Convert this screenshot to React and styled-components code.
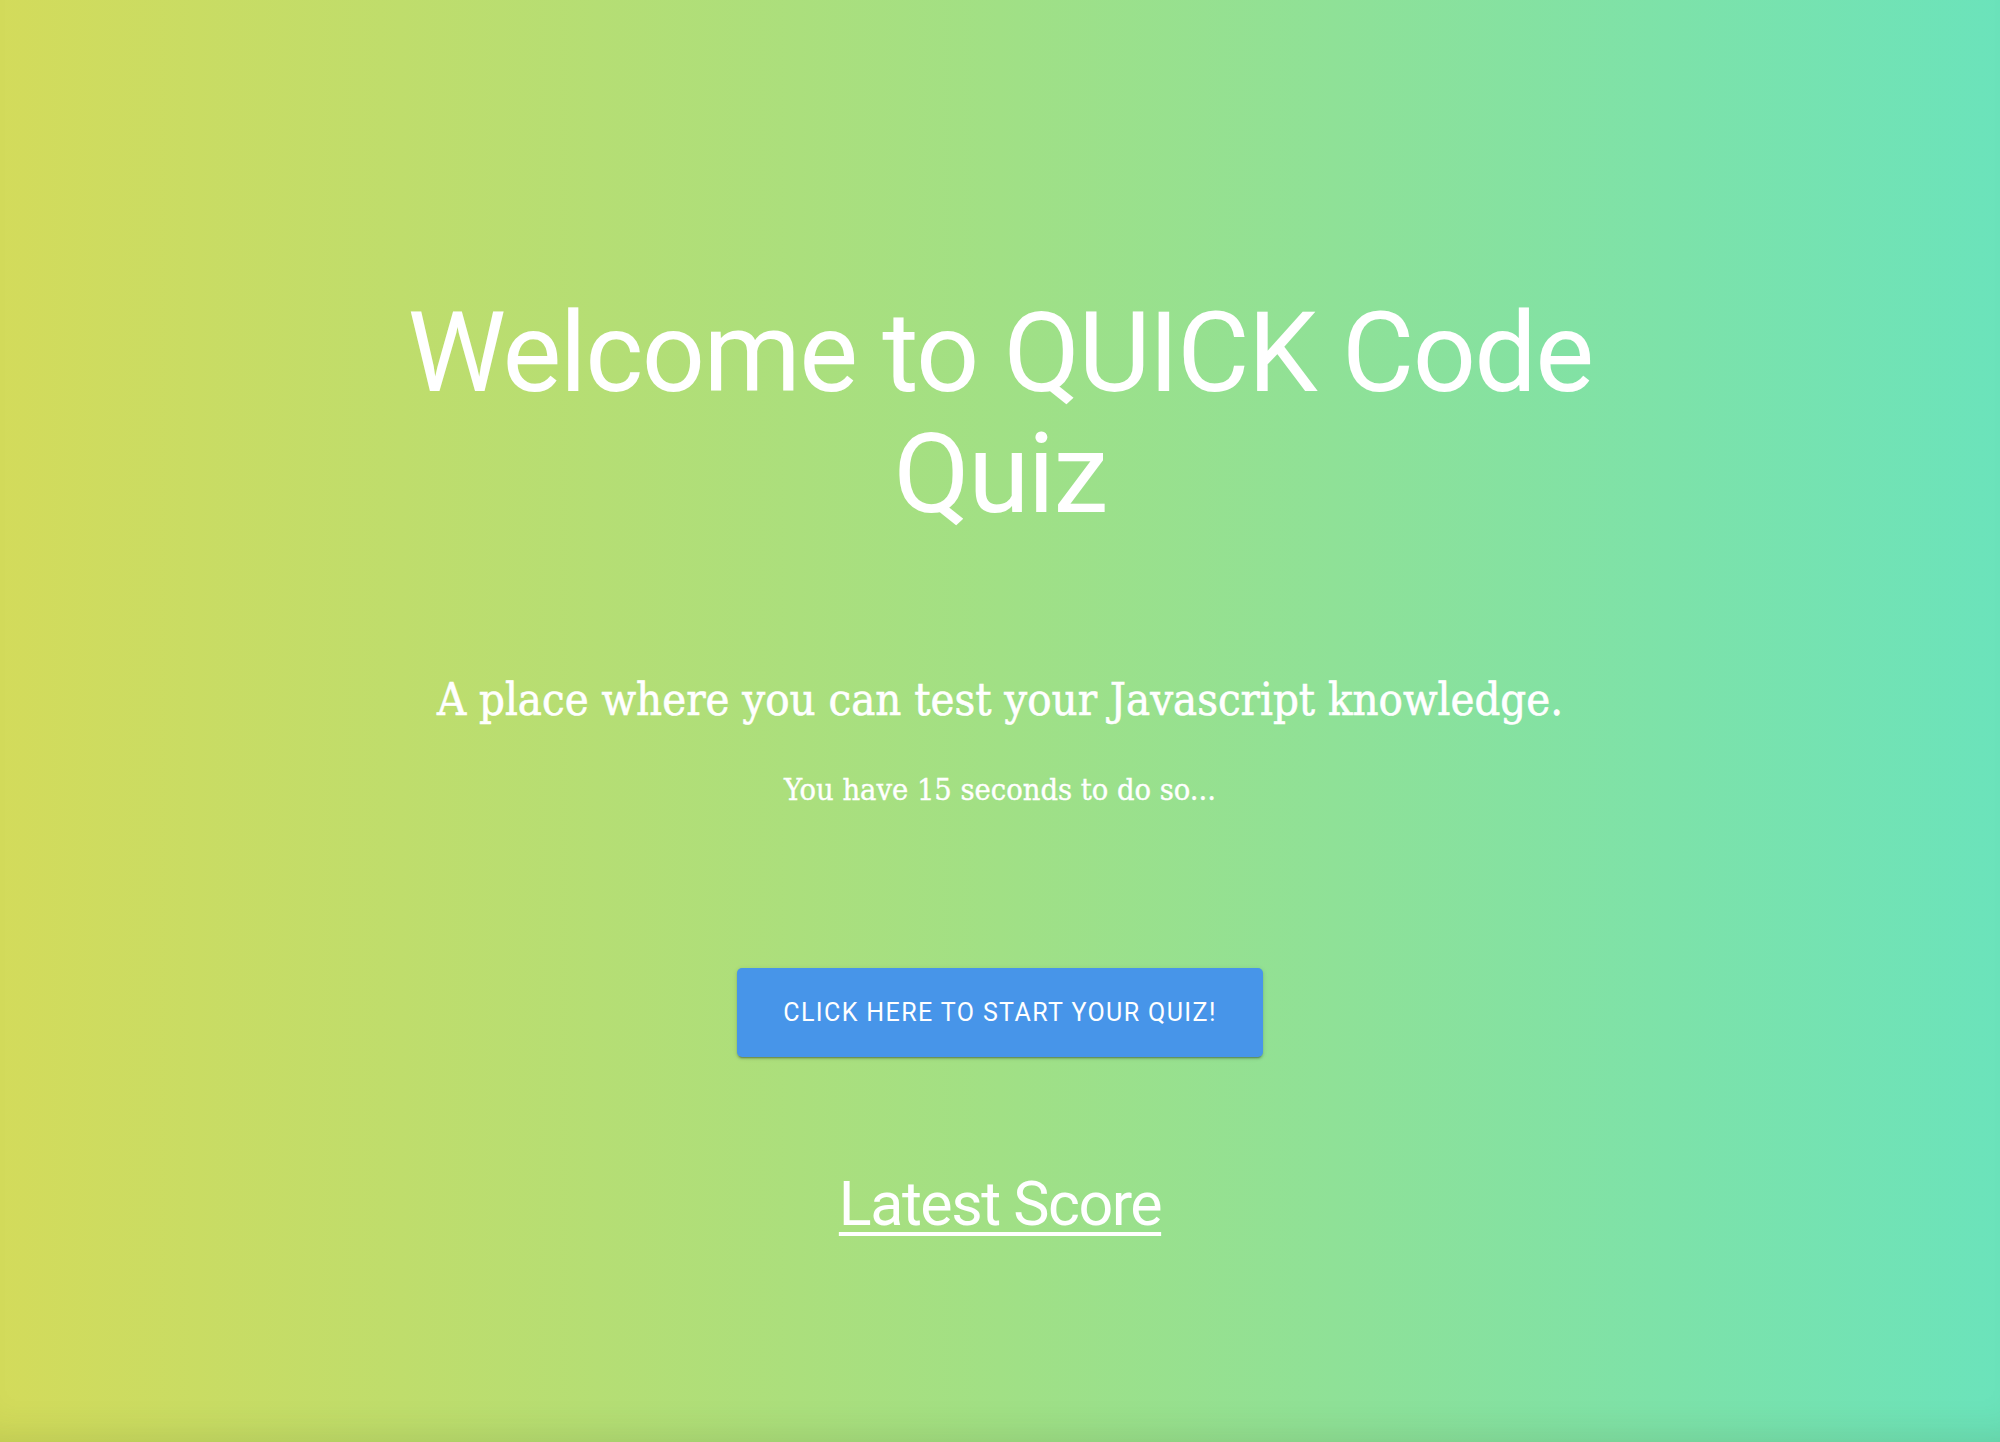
import styled, { createGlobalStyle } from 'styled-components';

const GlobalStyle = createGlobalStyle`
  html, body {
    margin: 0;
    padding: 0;
  }
  body {
    font-family: Roboto, "Liberation Sans", sans-serif;
  }
`;

const Page = styled.div`
  min-height: 1442px;
  box-sizing: border-box;
  padding-top: 293px;
  display: flex;
  flex-direction: column;
  align-items: center;
  background: linear-gradient(to right, #d3db5b 0%, #a1e085 50%, #6be3bb 100%);
  box-shadow: inset 0 -36px 40px -34px rgba(60, 90, 30, 0.18);
  color: #ffffff;
  text-align: center;
`;

const Title = styled.h1`
  margin: 0;
  width: 1240px;
  font-family: Roboto, sans-serif;
  font-weight: 400;
  font-size: 111px;
  line-height: 121px;
  letter-spacing: -1.6px;
`;

const Lead = styled.p`
  margin: ${(props) => props.top || '0'} 0 0;
  font-family: "DejaVu Serif Condensed", "DejaVu Serif", "Liberation Serif", serif;
  font-stretch: condensed;
  font-weight: 400;
  font-size: ${(props) => props.size || '45px'};
  line-height: ${(props) => props.height || '54px'};
  -webkit-text-stroke: ${(props) => props.stroke || '0.6px'} #ffffff;
  white-space: nowrap;
`;

const StartButton = styled.button`
  margin-top: 161px;
  width: 526px;
  height: 89px;
  border: none;
  border-radius: 5px;
  background-color: #4795e9;
  color: #ffffff;
  font-family: Roboto, sans-serif;
  font-weight: 400;
  font-size: 25px;
  letter-spacing: 1.4px;
  text-transform: uppercase;
  box-shadow: 0 3px 1px -2px rgba(0, 0, 0, 0.2), 0 2px 2px 0 rgba(0, 0, 0, 0.14), 0 1px 5px 0 rgba(0, 0, 0, 0.12);
  cursor: pointer;
`;

const ScoreLink = styled.a`
  margin-top: 111px;
  font-family: Roboto, sans-serif;
  font-weight: 400;
  font-size: 61px;
  line-height: 72px;
  letter-spacing: -1.5px;
  color: #ffffff;
  text-decoration: underline;
  text-decoration-thickness: 4px;
  text-underline-offset: 7px;
  cursor: pointer;
`;

export default function App() {
  return (
    <>
      <GlobalStyle />
      <Page>
        <Title>Welcome to QUICK Code Quiz</Title>
        <Lead top="138px">A place where you can test your Javascript knowledge.</Lead>
        <Lead top="46px" size="30.5px" height="34px" stroke="0.4px">You have 15 seconds to do so...</Lead>
        <StartButton>Click here to start your quiz!</StartButton>
        <ScoreLink>Latest Score</ScoreLink>
      </Page>
    </>
  );
}
